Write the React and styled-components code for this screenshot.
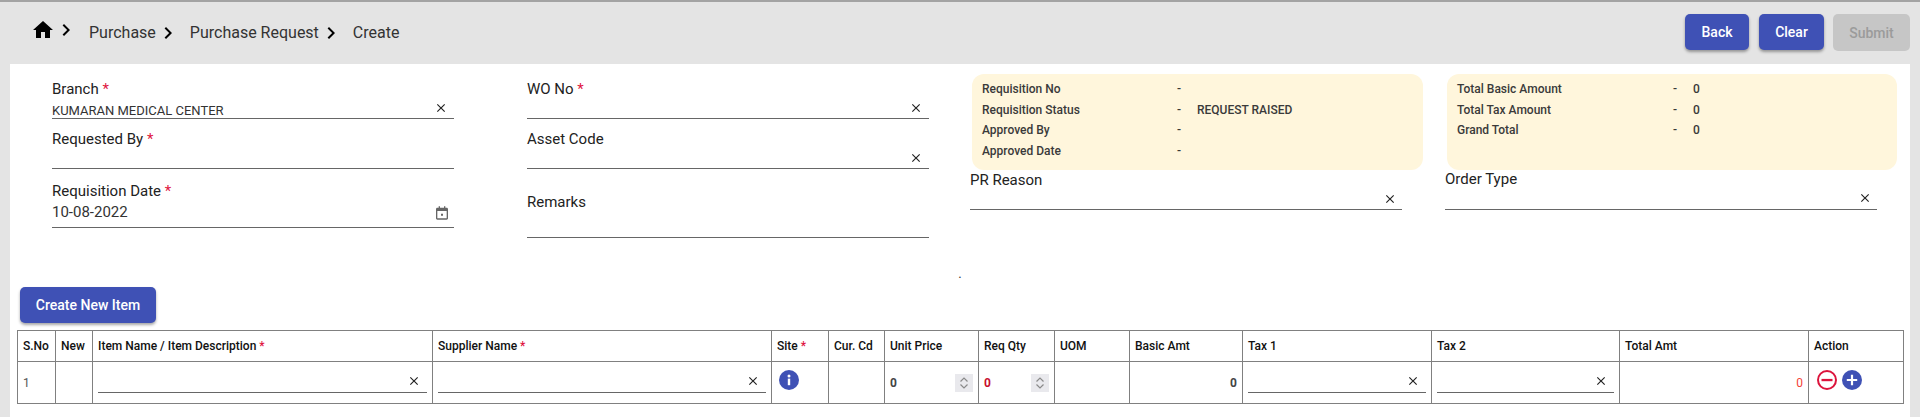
import React from "react";
import styled, { createGlobalStyle } from "styled-components";

const GlobalStyle = createGlobalStyle`
  html, body {
    margin: 0;
    height: 417px;
    overflow: hidden;
    background: #e4e4e4;
    font-family: Roboto, "Liberation Sans", sans-serif;
  }
  * {
    box-sizing: border-box;
  }
`;

const TopBar = styled.div`
  height: 64px;
  padding: 12px 10px 0 33px;
  border-top: 2px solid #a3a3a3;
  display: flex;
  justify-content: space-between;
  align-items: flex-start;
`;

const Crumbs = styled.nav`
  display: flex;
  align-items: center;
  height: 37px;
  font-size: 16px;
  color: #333;
`;

const CrumbIcon = styled.svg`
  width: ${(props) => props.$size}px;
  height: ${(props) => props.$size}px;
  margin: ${(props) => props.$margin || 0};
  fill: #000;
  flex: none;
`;

const Actions = styled.div`
  display: flex;
  gap: 10px;
`;

const ActionButton = styled.button`
  width: ${(props) => props.$width}px;
  height: ${(props) => (props.disabled ? 37 : 36)}px;
  margin-left: ${(props) => (props.disabled ? -1 : 0)}px;
  padding: 0;
  border: 0;
  border-radius: 5px;
  font: 500 14px Roboto, sans-serif;
  white-space: nowrap;
  color: ${(props) => (props.disabled ? "#9b9b9b" : "#fff")};
  background: ${(props) => (props.disabled ? "#c6c6c6" : "#3f51b5")};
  box-shadow: ${(props) =>
    props.disabled ? "none" : "0 2px 3px rgba(0, 0, 0, 0.35)"};
`;

const Panel = styled.main`
  margin: 0 10px;
  height: 353px;
  padding-top: 10px;
  background: #fff;
`;

const FormRow = styled.div`
  display: flex;
  height: 190px;
`;

const Column = styled.div`
  width: ${(props) => props.$width}px;
  margin-left: ${(props) => props.$left}px;
  padding-top: ${(props) => props.$top || 0}px;
  flex: none;
`;

const Field = styled.div`
  margin-top: ${(props) => props.$top || 0}px;
  width: ${(props) => (props.$width ? `${props.$width}px` : "auto")};
`;

const Label = styled.div`
  height: 20px;
  line-height: 20px;
  font-size: 15px;
  color: #222;
`;

const Required = styled.span`
  color: #e0153f;
`;

const Control = styled.div`
  height: ${(props) => props.$height || 20}px;
  display: flex;
  align-items: center;
  justify-content: space-between;
  border-bottom: 1px solid #666;
  color: #333;
  font-size: ${(props) => props.$font || 15}px;
`;

const Value = styled.span`
  margin-top: ${(props) => props.$shift || 0}px;
`;

const ClearIcon = styled.svg`
  width: 14px;
  height: 14px;
  margin-right: ${(props) => props.$right || 6}px;
  margin-bottom: 2px;
  fill: #222;
  flex: none;
`;

const DateIcon = styled.svg`
  width: 16px;
  height: 16px;
  margin: 0 4px 3px 0;
  fill: #666;
  flex: none;
`;

const InfoCard = styled.div`
  width: ${(props) => props.$width}px;
  height: 96px;
  margin-left: 2px;
  padding: 5px 10px;
  border-radius: 12px;
  background: #fff6dc;
`;

const InfoRow = styled.div`
  display: grid;
  grid-template-columns: ${(props) => props.$label}px 20px 1fr;
  height: 20.6px;
  align-items: center;
  font-size: 12px;
  font-weight: 500;
  color: #3a3a3a;
`;

const Dot = styled.div`
  height: 23px;
  line-height: 19px;
  font-size: 13px;
  text-align: center;
  color: #333;
`;

const CreateButton = styled(ActionButton)`
  display: block;
  margin-left: 10px;
`;

const ItemTable = styled.table`
  width: 1886px;
  margin: 7px 0 0 7px;
  table-layout: fixed;
  border-collapse: collapse;
`;

const ColWidth = styled.col`
  width: ${(props) => props.$width}px;
`;

const HeadCell = styled.th`
  height: 31px;
  padding: 0 5px;
  border: 1px solid #808080;
  text-align: left;
  font-size: 12px;
  font-weight: 500;
  color: #111;
  white-space: nowrap;
`;

const BodyCell = styled.td`
  height: 42px;
  padding: 0 5px;
  border: 1px solid #808080;
  font-size: 12px;
  color: ${(props) => props.$color || "#555"};
  font-weight: ${(props) => props.$weight || 400};
  text-align: ${(props) => props.$align || "left"};
  vertical-align: middle;
`;

const CellControl = styled(Control)`
  margin-top: 0;
  height: 20px;
`;

const NumberField = styled.div`
  display: flex;
  align-items: center;
  justify-content: space-between;
  margin-top: 1px;
  font-weight: 700;
  color: ${(props) => props.$color || "#444"};
`;

const Spinner = styled.svg`
  display: block;
  width: 18px;
  height: 18px;
  background: #e9e9ed;
  fill: none;
  stroke: #8a8a8a;
  stroke-width: 1.2;
`;

const InfoIcon = styled.svg`
  display: block;
  width: 20px;
  height: 20px;
  margin: -5px 0 0 2px;
`;

const RoundIcons = styled.div`
  display: flex;
  gap: 5px;
  margin: -5px 0 0 3px;
`;

const RoundIcon = styled.svg`
  width: 20px;
  height: 20px;
  flex: none;
`;

const homePath = "M10 20v-6h4v6h5v-8h3L12 3 2 12h3v8z";
const chevronPath = "M10 6 8.59 7.41 13.17 12l-4.58 4.59L10 18l6-6z";
const closePath =
  "M19 6.41 17.59 5 12 10.59 6.41 5 5 6.41 10.59 12 5 17.59 6.41 19 12 13.41 17.59 19 19 17.59 13.41 12z";

const Chevron = ({ margin }) => (
  <CrumbIcon $size={24} $margin={margin} viewBox="0 0 24 24">
    <path d={chevronPath} />
  </CrumbIcon>
);

const Clear = ({ right }) => (
  <ClearIcon $right={right} viewBox="0 0 24 24">
    <path d={closePath} />
  </ClearIcon>
);

const TextField = ({ label, required, top, height, value, shift, right, font, children }) => (
  <Field $top={top}>
    <Label>
      {label}
      {required && <Required> *</Required>}
    </Label>
    <Control $height={height} $font={font}>
      <Value $shift={shift}>{value}</Value>
      {children || (right !== 0 && <Clear right={right} />)}
    </Control>
  </Field>
);

const Info = ({ label, value, width }) => (
  <InfoRow $label={width}>
    <span>{label}</span>
    <span>-</span>
    <span>{value}</span>
  </InfoRow>
);

const SpinValue = ({ color }) => (
  <NumberField $color={color}>
    0
    <Spinner viewBox="0 0 18 18">
      <path d="M5.5 7.5 9 4l3.5 3.5M5.5 10.5 9 14l3.5-3.5" />
    </Spinner>
  </NumberField>
);

const LineCell = () => (
  <BodyCell>
    <CellControl>
      <span />
      <Clear />
    </CellControl>
  </BodyCell>
);

const columns = [38, 37, 340, 339, 57, 56, 94, 76, 75, 113, 189, 188, 189, 95];

const heads = [
  ["S.No"],
  ["New"],
  ["Item Name / Item Description", true],
  ["Supplier Name", true],
  ["Site", true],
  ["Cur. Cd"],
  ["Unit Price"],
  ["Req Qty"],
  ["UOM"],
  ["Basic Amt"],
  ["Tax 1"],
  ["Tax 2"],
  ["Total Amt"],
  ["Action"],
];

const App = () => {
  return (
    <>
      <GlobalStyle />
      <TopBar>
        <Crumbs>
          <CrumbIcon $size={24} $margin="-6px 0 0 -2px" viewBox="0 0 24 24">
            <path d={homePath} />
          </CrumbIcon>
          <Chevron margin="-5px 11px 0 -1px" />
          Purchase
          <Chevron margin="0 10px 0 0" />
          Purchase Request
          <Chevron margin="0 10px 0 0" />
          Create
        </Crumbs>
        <Actions>
          <ActionButton $width={64}>Back</ActionButton>
          <ActionButton $width={65}>Clear</ActionButton>
          <ActionButton $width={77} disabled>
            Submit
          </ActionButton>
        </Actions>
      </TopBar>
      <Panel>
        <FormRow>
          <Column $left={42} $width={402} $top={5}>
            <TextField label="Branch" required value="KUMARAN MEDICAL CENTER" font={13} shift={3} />
            <TextField label="Requested By" required top={10} right={0} />
            <TextField label="Requisition Date" required top={12} height={27} value="10-08-2022" shift={-5}>
              <DateIcon viewBox="0 0 24 24">
                <path d="M19 4h-2V2h-2v2H9V2H7v2H5c-1.1 0-2 .9-2 2v14c0 1.1.9 2 2 2h14c1.1 0 2-.9 2-2V6c0-1.1-.9-2-2-2zm0 16H5V9h14v11zm-8.5-7h3v3h-3z" />
              </DateIcon>
            </TextField>
          </Column>
          <Column $left={73} $width={402} $top={5}>
            <TextField label="WO No" required />
            <TextField label="Asset Code" top={10} />
            <TextField label="Remarks" top={23} height={26} right={0} />
          </Column>
          <Column $left={41} $width={475}>
            <InfoCard $width={451}>
              <Info label="Requisition No" width={195} />
              <Info label="Requisition Status" value="REQUEST RAISED" width={195} />
              <Info label="Approved By" width={195} />
              <Info label="Approved Date" width={195} />
            </InfoCard>
            <Field $width={432}>
              <TextField label="PR Reason" right={5} />
            </Field>
          </Column>
          <Column $left={0} $width={452}>
            <InfoCard $width={450}>
              <Info label="Total Basic Amount" value="0" width={216} />
              <Info label="Total Tax Amount" value="0" width={216} />
              <Info label="Grand Total" value="0" width={216} />
            </InfoCard>
            <Field $width={432}>
              <TextField label="Order Type" top={-1} height={21} right={5} />
            </Field>
          </Column>
        </FormRow>
        <Dot>.</Dot>
        <CreateButton $width={136}>Create New Item</CreateButton>
        <ItemTable>
          <colgroup>
            {columns.map((width, index) => (
              <ColWidth key={index} $width={width} />
            ))}
          </colgroup>
          <thead>
            <tr>
              {heads.map(([title, required]) => (
                <HeadCell key={title}>
                  {title}
                  {required && <Required> *</Required>}
                </HeadCell>
              ))}
            </tr>
          </thead>
          <tbody>
            <tr>
              <BodyCell>1</BodyCell>
              <BodyCell />
              <LineCell />
              <LineCell />
              <BodyCell>
                <InfoIcon viewBox="0 0 20 20">
                  <circle cx="10" cy="10" r="10" fill="#3f51b5" />
                  <rect x="8.8" y="8.6" width="2.4" height="6.6" fill="#fff" />
                  <circle cx="10" cy="5.9" r="1.5" fill="#fff" />
                </InfoIcon>
              </BodyCell>
              <BodyCell />
              <BodyCell>
                <SpinValue />
              </BodyCell>
              <BodyCell>
                <SpinValue color="#c8102e" />
              </BodyCell>
              <BodyCell />
              <BodyCell $align="right" $weight={700} $color="#444">
                0
              </BodyCell>
              <LineCell />
              <LineCell />
              <BodyCell $align="right" $color="#f44336">
                0
              </BodyCell>
              <BodyCell>
                <RoundIcons>
                  <RoundIcon viewBox="0 0 20 20">
                    <circle cx="10" cy="10" r="9" fill="none" stroke="#dc143c" strokeWidth="2" />
                    <rect x="4.5" y="8.9" width="11" height="2.3" fill="#dc143c" />
                  </RoundIcon>
                  <RoundIcon viewBox="0 0 20 20">
                    <circle cx="10" cy="10" r="10" fill="#3f51b5" />
                    <path d="M8.9 4.8h2.2v4.1h4.1v2.2h-4.1v4.1H8.9v-4.1H4.8V8.9h4.1z" fill="#fff" />
                  </RoundIcon>
                </RoundIcons>
              </BodyCell>
            </tr>
          </tbody>
        </ItemTable>
      </Panel>
    </>
  );
};

export default App;
